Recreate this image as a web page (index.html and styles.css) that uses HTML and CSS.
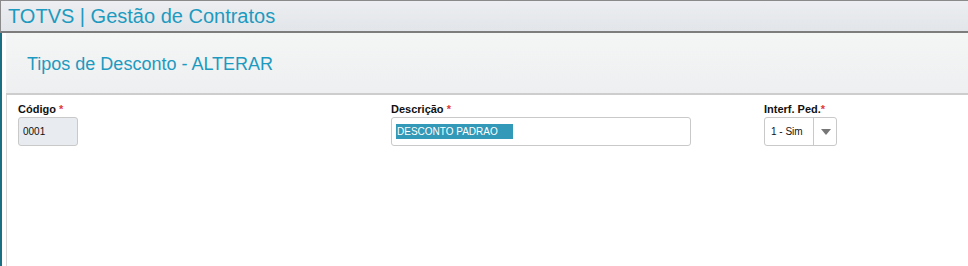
FILE: index.html
```html
<!DOCTYPE html>
<html lang="pt-BR">
<head>
    <meta charset="UTF-8">
    <title>TOTVS | Gestão de Contratos</title>
    <link rel="stylesheet" href="styles.css">
</head>
<body>
    <div class="app-bar">
        <h1>TOTVS | Gestão de Contratos</h1>
    </div>
    <div class="main">
        <div class="page-head">
            <h2>Tipos de Desconto - ALTERAR</h2>
        </div>
        <div class="form">
            <div class="field">
                <label>Código <span class="req">*</span></label>
                <div class="input disabled code">0001</div>
            </div>
            <div class="field">
                <label>Descrição <span class="req">*</span></label>
                <div class="input desc"><span class="sel">DESCONTO PADRAO</span></div>
            </div>
            <div class="field">
                <label>Interf. Ped.<span class="req">*</span></label>
                <div class="select">
                    <span class="value">1 - Sim</span>
                    <span class="arrow"></span>
                </div>
            </div>
        </div>
    </div>
</body>
</html>
```

FILE: styles.css
```css
body {
    margin: 0;
    font-family: "Liberation Sans", Arial, sans-serif;
    background: #fff;
    height: 266px;
    overflow: hidden;
}

.app-bar {
    height: 30px;
    border-top: 1px solid #8a8a8a;
    border-left: 1px solid #8a8a8a;
    border-bottom: 2px solid #7d7d7d;
    background: linear-gradient(#eceef1, #e2e5e9);
    padding-left: 7px;
}

.app-bar h1 {
    margin: 0;
    font-size: 20px;
    font-weight: normal;
    line-height: 31px;
    color: #1d9ac0;
}

.main {
    border-left: 2px solid #1b6f82;
    height: 233px;
    padding-left: 4px;
}

.page-head {
    height: 60px;
    background: linear-gradient(#f4f5f5, #eeeff0);
    border-bottom: 2px solid #cdcdcd;
    padding-left: 21px;
}

.page-head h2 {
    margin: 0;
    font-size: 18px;
    font-weight: normal;
    line-height: 62px;
    color: #1d9ac0;
}

.form {
    display: grid;
    grid-template-columns: 373px 373px 1fr;
    padding: 7px 0 0 11px;
    border-left: 1px solid #d6d6d6;
    height: 170px;
}

.field label {
    display: block;
    font-size: 11px;
    font-weight: bold;
    color: #111;
    height: 14px;
    line-height: 14px;
    margin-bottom: 1px;
}

.req {
    color: #e03a3a;
}

.input {
    box-sizing: border-box;
    height: 29px;
    border: 1px solid #c9c9c9;
    border-radius: 3px;
    font-size: 10px;
    padding: 0 4px;
    display: flex;
    align-items: center;
    color: #111;
}

.input.disabled {
    background: #e8ebf0;
}

.code {
    width: 60px;
}

.desc {
    width: 300px;
}

.sel {
    background: #3299b8;
    color: #fff;
    width: 117px;
    line-height: 15px;
    padding-left: 1px;
    box-sizing: border-box;
}

.select {
    box-sizing: border-box;
    width: 73px;
    height: 29px;
    border: 1px solid #c9c9c9;
    border-radius: 3px;
    display: flex;
    align-items: center;
    font-size: 10px;
    color: #111;
}

.select .value {
    width: 49px;
    padding-left: 6px;
    box-sizing: border-box;
    border-right: 1px solid #c9c9c9;
    line-height: 27px;
}

.select .arrow {
    margin-left: 7px;
    width: 0;
    height: 0;
    border-left: 5px solid transparent;
    border-right: 5px solid transparent;
    border-top: 6px solid #777;
}
```
